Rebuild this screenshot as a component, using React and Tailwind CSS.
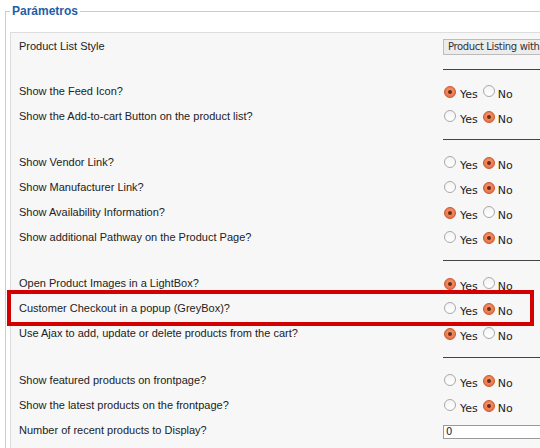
const rows = [
  { label: 'Product List Style', type: 'select' },
  { type: 'hr', h: 'h-[20px]' },
  { label: 'Show the Feed Icon?', value: 'yes' },
  { label: 'Show the Add-to-cart Button on the product list?', value: 'no' },
  { type: 'hr' },
  { label: 'Show Vendor Link?', value: 'no' },
  { label: 'Show Manufacturer Link?', value: 'no' },
  { label: 'Show Availability Information?', value: 'yes' },
  { label: 'Show additional Pathway on the Product Page?', value: 'no' },
  { type: 'hr' },
  { label: 'Open Product Images in a LightBox?', value: 'yes' },
  { label: 'Customer Checkout in a popup (GreyBox)?', value: 'no' },
  { label: 'Use Ajax to add, update or delete products from the cart?', value: 'yes' },
  { type: 'hr', h: 'h-[22px]' },
  { label: 'Show featured products on frontpage?', value: 'no' },
  { label: 'Show the latest products on the frontpage?', value: 'no' },
  { label: 'Number of recent products to Display?', type: 'input' },
]

function Radio({ checked }) {
  return checked ? (
    <span className="flex h-[12px] w-[12px] shrink-0 items-center justify-center rounded-full border border-[#c9552c] bg-[radial-gradient(circle_at_50%_40%,#f59a72,#e4673b)]">
      <span className="h-[4px] w-[4px] rounded-full bg-[#6b2a14]" />
    </span>
  ) : (
    <span className="-mt-[1px] block h-[12px] w-[12px] shrink-0 rounded-full border border-[#a8a8a8] bg-[linear-gradient(#f4f4f4,#ffffff)]" />
  )
}

function YesNo({ value }) {
  return (
    <div className="flex items-center text-[11px] leading-[13px] text-[#222] font-['DejaVu_Sans',sans-serif]">
      <Radio checked={value === 'yes'} />
      <span className="ml-[4px] mt-[5px]">Yes</span>
      <span className="ml-[5px] flex"><Radio checked={value === 'no'} /></span>
      <span className="ml-[3px] mt-[5px]">No</span>
    </div>
  )
}

export default function App() {
  return (
    <div className="relative h-[448px] w-[540px] overflow-hidden bg-white font-['Liberation_Sans',Arial,sans-serif]">
      <fieldset className="ml-[5px] mt-[2px] w-[560px] border border-[#cccccc] px-[4px] pb-[4px] pt-[12px]">
        <legend className="px-[2px] text-[12px] font-bold text-[#1f5ea8]">Parámetros</legend>
        <div className="border border-[#dddddd] bg-[#f7f7f7] pb-[6px] pt-[1px]">
          {rows.map((r, i) =>
            r.type === 'hr' ? (
              <div key={i} className={`flex items-center ${r.h || 'h-[21px]'}`}>
                <div className="ml-[432px] h-px flex-1 bg-[#444]" />
              </div>
            ) : (
              <div key={i} className="flex h-[25px] items-center">
                <div className="w-[432px] pl-[8px] text-[11px] text-[#222]">{r.label}</div>
                {r.type === 'select' ? (
                  <div className="h-[16px] flex-1 border border-[#bcbcbc] bg-[#ececec] pl-[4px] text-[10px] leading-[14px] tracking-[-0.35px] text-[#333] font-['DejaVu_Sans',sans-serif] whitespace-nowrap">
                    Product Listing with
                  </div>
                ) : r.type === 'input' ? (
                  <div className="mt-[2px] h-[14px] flex-1 border border-[#9a9a9a] bg-white pl-[2px] text-[10px] leading-[12px] text-[#222] font-['DejaVu_Sans',sans-serif]">
                    0
                  </div>
                ) : (
                  <div className="ml-[1px]"><YesNo value={r.value} /></div>
                )}
              </div>
            )
          )}
        </div>
      </fieldset>
      <div className="pointer-events-none absolute left-[7px] top-[290px] h-[36px] w-[527px] border-[4px] border-[#d40000]" />
    </div>
  )
}
